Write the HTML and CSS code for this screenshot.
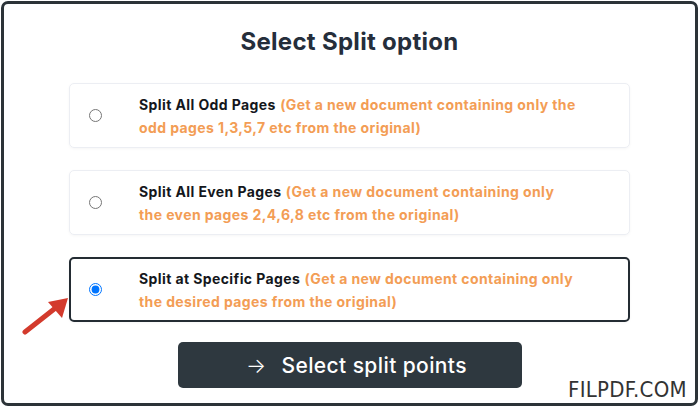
FILE: index.html
```html
<!DOCTYPE html>
<html lang="en">
<head>
    <meta charset="UTF-8">
    <meta name="viewport" content="width=device-width, initial-scale=1.0">
    <title>Select Split option</title>
    <link rel="stylesheet" href="styles.css">
</head>
<body>
    <div class="frame">
        <h1>Select Split option</h1>

        <div class="options">
            <label class="option">
                <input type="radio" name="split">
                <span class="option-text">
                    <b>Split All Odd Pages</b>
                    <em>(Get a new document containing only the odd pages 1,3,5,7 etc from the original)</em>
                </span>
            </label>

            <label class="option">
                <input type="radio" name="split">
                <span class="option-text">
                    <b>Split All Even Pages</b>
                    <em>(Get a new document containing only the even pages 2,4,6,8 etc from the original)</em>
                </span>
            </label>

            <label class="option selected">
                <input type="radio" name="split" checked>
                <span class="option-text">
                    <b>Split at Specific Pages</b>
                    <em>(Get a new document containing only the desired pages from the original)</em>
                </span>
            </label>
        </div>

        <button class="split-btn"><span class="arrow">&rarr;</span> Select split points</button>

        <!-- red pointer arrow -->
        <svg class="pointer" width="50" height="40" viewBox="0 0 50 40">
            <line x1="3" y1="36" x2="36" y2="10" stroke="#d33a2c" stroke-width="5" stroke-linecap="round"/>
            <polygon points="46,2 26,6 40,22" fill="#d33a2c"/>
        </svg>

        <div class="watermark">FILPDF.COM</div>
    </div>
</body>
</html>
```

FILE: styles.css
```css
body {
    margin: 0;
    background: #fff;
    font-family: 'Inter', 'Noto Sans', sans-serif;
}
.frame {
    position: relative;
    box-sizing: border-box;
    margin: 1px 0 0 1px;
    width: 697px;
    height: 405px;
    border: 3px solid #2c3338;
    border-radius: 7px;
    display: flex;
    flex-direction: column;
    align-items: center;
    padding-top: 22px;
}
h1 {
    margin: 0 0 25px;
    font-size: 24px;
    line-height: 32px;
    font-weight: 700;
    color: #252e3b;
    letter-spacing: 0.3px;
}
.options {
    display: flex;
    flex-direction: column;
    gap: 22px;
    width: 561px;
}
.option {
    display: flex;
    align-items: center;
    box-sizing: border-box;
    height: 65px;
    padding: 0 20px 0 19px;
    border: 1px solid #eceef3;
    border-radius: 5px;
    box-shadow: 0 1px 3px rgba(0, 0, 0, 0.04);
    cursor: pointer;
}
.option.selected {
    border: 2px solid #242c33;
    padding-left: 18px;
}
.option input {
    margin: 0 37px 0 0;
    width: 13px;
    height: 13px;
    flex: none;
}
.option-text {
    width: 442px;
    font-size: 14px;
    line-height: 23px;
    letter-spacing: 0.4px;
}
.option-text b {
    color: #14171c;
    font-weight: 700;
}
.option-text em {
    font-style: normal;
    font-weight: 700;
    color: #f39d55;
}
.split-btn {
    margin-top: 20px;
    width: 344px;
    height: 46px;
    padding: 0 0 0 14px;
    background: #2e383f;
    color: #fff;
    border: none;
    border-radius: 5px;
    font-family: 'Inter', 'Noto Sans', sans-serif;
    font-size: 21px;
    font-weight: 500;
    letter-spacing: 0.4px;
    cursor: pointer;
}
.split-btn .arrow {
    font-weight: 300;
    margin-right: 9px;
}
.pointer {
    position: absolute;
    left: 18px;
    top: 292px;
}
.watermark {
    position: absolute;
    right: 8px;
    bottom: 1px;
    font-family: 'DejaVu Sans Condensed', 'DejaVu Sans', sans-serif;
    font-stretch: condensed;
    font-size: 22px;
    color: #333;
    letter-spacing: 0.3px;
}
```
